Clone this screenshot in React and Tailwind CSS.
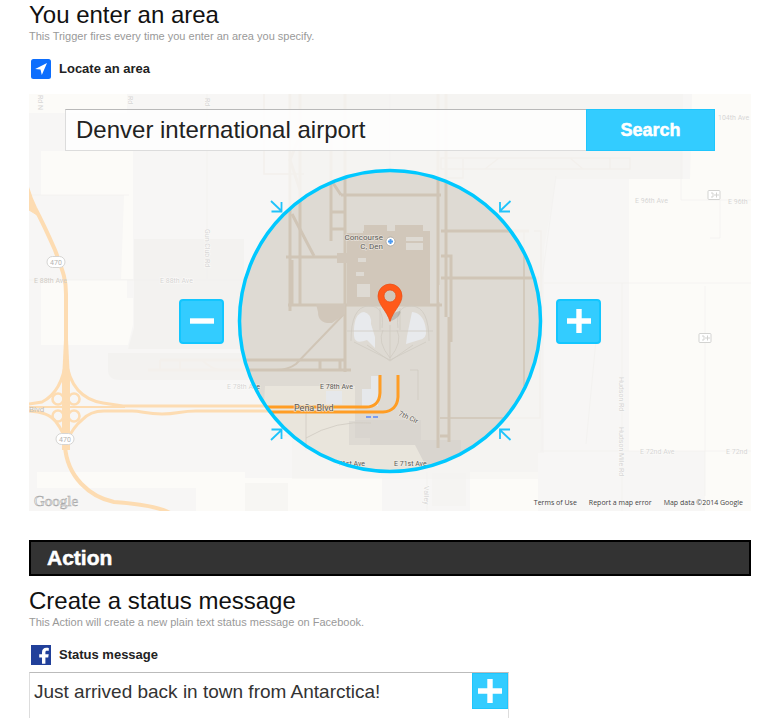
import { useId } from 'react';

const FONT = "font-['Liberation_Sans',Arial,sans-serif]";

function LocationIcon() {
  return (
    <svg viewBox="0 0 20 20" className="size-5" aria-hidden="true">
      <rect width="20" height="20" rx="2.5" fill="#0d6efd" />
      <path d="M16 4 4.200 10l5.300.500 1.300 5.500z" fill="#fff" />
    </svg>
  );
}

function FacebookIcon() {
  return (
    <svg viewBox="0 0 20 20" className="size-5" aria-hidden="true">
      <rect width="20" height="20" fill="#21409a" />
      <path
        d="M11 18.700v-6.300H8.200V9.300H11V7.200c0-2.900 1.700-4.500 4.300-4.500 1.200 0 2.200.1 2.500.2v2.900h-1.700c-1.400 0-1.700.7-1.700 1.600v1.900h3.300l-.5 3.100h-2.800v6.300z"
        fill="#fff"
      />
    </svg>
  );
}

function PlusIcon({ className }) {
  return (
    <svg viewBox="0 0 24 24" className={className} aria-hidden="true">
      <path d="M12 0v24M0 12h24" stroke="#fff" strokeWidth="5.4" />
    </svg>
  );
}

function MinusIcon({ className }) {
  return (
    <svg viewBox="0 0 24 24" className={className} aria-hidden="true">
      <path d="M0 12h24" stroke="#fff" strokeWidth="5.4" />
    </svg>
  );
}

function Label({ x, y, children, size = 7, anchor = 'start', rotate }) {
  return (
    <text
      x={x}
      y={y}
      fontSize={size}
      textAnchor={anchor}
      fill="#5c5a57"
      stroke="#f1eee8"
      strokeWidth="1.4"
      strokeOpacity="0.7"
      paintOrder="stroke"
      transform={rotate ? `rotate(${rotate} ${x} ${y})` : undefined}
    >
      {children}
    </text>
  );
}

function Shield({ x, y }) {
  return (
    <g>
      <rect x={x - 9} y={y - 5.5} width="18" height="11" rx="5.5" fill="#fff" stroke="#d6d5d3" />
      <text x={x} y={y + 2.5} fontSize="7" textAnchor="middle" fill="#b5b4b2">470</text>
    </g>
  );
}

function TransitStop({ x, y }) {
  return (
    <g fill="none" stroke="#d3d3d1">
      <rect x={x - 6} y={y - 4.5} width="12" height="9" rx="1" fill="#fff" />
      <path d={`M${x - 3} ${y - 2}h2v4h-2M${x} ${y}h5M${x + 2.5} ${y - 2.5}v5`} />
    </g>
  );
}

function MapDrawing() {
  const clip = useId();
  return (
    <svg
      viewBox="29 94 722 417"
      preserveAspectRatio="xMidYMid slice"
      className="absolute inset-0 size-full font-[Roboto,sans-serif]"
      aria-hidden="true"
    >
      <defs>
        <clipPath id={clip}>
          <circle cx="390" cy="321" r="151" />
        </clipPath>
      </defs>

      <rect x="29" y="94" width="722" height="417" fill="#dedbd6" />

      <g fill="#f2eee2">
        <path d="M29 94h98v19H29zM41 151h92v44H41zM124 195h9v84h-12zM41 280h86v18h6v27l-5 20H41z" />
        <path d="M629 179h61l2-85h59v417H705v-60H629z" />
        <path d="M37 472h208v39H196v-23H37zM470 472h68v39h-68zM245 478h137v33H245z" />
      </g>
      <g fill="#d1cdc6">
        <path d="M134 239h110v110H128l6-21zM108 353h140v27H120q-12 0-12-10z" />
        <path d="M292 94h391v85h-127l-12 70v230H292z" fillOpacity="0.45" />
        <path d="M245 483h43v28h-43zM432 473h34v33h-34z" fillOpacity="0.6" />
      </g>
      <path d="M705 453v58H538v-58z" fill="#dedbd6" />

      <g stroke="#c8c3ba" strokeWidth="1" fill="none" opacity="0.6">
        <path d="M29 195h100M29 280h215M207 94v185M556 176l-14 103v172M544 283h207M622 283v228M705 286v210M681 151v49h70M720 200v38h-10M540 451h211M596 340l-10 104" />
        <path d="M390 94v76M427 472v39" />
      </g>

      <g clipPath={`url(#${clip})`}>
        <rect x="238" y="169" width="304" height="304" fill="#dedad3" />
        <path d="M265 386h90v35h-6v24h70q8 0 12 10v20H260z" fill="#e9e5dc" />
        <path d="M355 420h66v20h40v32h-32l-14-27h-45v-7h-15z" fill="#d9d5cf" />
      </g>

      <g fill="none" stroke="#d0c5b6" strokeWidth="3">
        <path d="M290 94v217M300 94v212M331 130v111M345 94v278M438 94v354M446 94v223M341 195h100M331 212h13M331 229h13M286 257h64M288 305h154M351 370H148M160 360h184M320 360v10M340 360v10M441 231h88M441 256h10v86M441 278h98M449 317v125M440 436h10" />
        <path d="m292 214 22 42M331 180l10 15M292 260v45M300 190l-10-30 12-30" />
        <path d="M345 313 296 364q-8 6-20 6M160 360v10M180 360v10M202 360q10 10 20 10" strokeWidth="2" />
        <path d="M441 158h189v11H441zM485 169l14-11M570 158l13 11M610 158v11M446 169v9h17v-19M524 231v155M534 231h7v66M540 350v68H440M264 94v80h40" strokeWidth="1.5" />
      </g>

      <path
        d="M363 231h1v-6h23v6h8v-6h28v6h7v75h-83v-43h-10v-10h10v-20h16z"
        fill="#d1c7ba"
      />
      <path d="M316 304h29v10l-13 9q-14 1-14-11z" fill="#d1c7ba" clipPath={`url(#${clip})`} />
      <g fill="#dedad3">
        <path d="M406 237h17v4h-17zM406 243h17v7h-17zM358 258h8v4h-8zM356 272h8v4h-8zM357 284h13v13h-13zM432 285h3v17h-3zM439 285h4v17h-4z" />
      </g>

      <path d="M354 336q-1-23 10-24 8 2 7 12l4 13v11l-8-8q-12 5-13-4zM412 312q12 1 14 18 1 9-7 10l-13 4 1-8z" fill="#e8eaed" />
      <path d="M371 376h7v30h-16v-17h9zM326 391h16v13h-16z" fill="#e6e8eb" />
      <g fill="none" stroke="#cfcac1" strokeWidth="0.800">
        <path d="M351 341q0-34 17-35t14 22M429 341q0-34-17-35t-14 22M354 342l36 18 36-18M367 345l23 16 23-16M380 308v22M400 308v22M390 325v35M383 330q-6 12 7 28M397 330q6 12-7 28M347 331h86M410 370h8v30M306 410v41q0-15-35-17M306 438q30-18 65-15" />
      </g>

      <g fill="none" stroke="#ff9d24" strokeWidth="3" clipPath={`url(#${clip})`}>
        <path d="M262 407h104q13 0 14-14v-18M262 412h121q14-1 15-15v-22" />
      </g>
      <path d="M366 417h5M373 417h5" stroke="#7c9df0" strokeWidth="2" />

      <Label x={160} y={283}>E 88th Ave</Label>
      <Label x={635} y={203}>E 96th Ave</Label>
      <Label x={728} y={204}>E 96th</Label>
      <Label x={718} y={120}>104th Ave</Label>
      <Label x={227} y={389}>E 78th Ave</Label>
      <Label x={320} y={389}>E 78th Ave</Label>
      <Label x={640} y={454}>E 72nd Ave</Label>
      <Label x={726} y={454}>E 72nd</Label>
      <Label x={205} y={229} rotate={90}>Gun Club Rd</Label>
      <Label x={619} y={377} rotate={90}>Hudson Rd</Label>
      <Label x={619} y={427} rotate={90}>Hudson Mile Rd</Label>
      <Label x={424} y={486} rotate={90}>Valley</Label>
      <Label x={38} y={95} rotate={90}>Rd N</Label>
      <Label x={128} y={96} rotate={90}>Rd</Label>
      <Label x={205} y={98} rotate={90}>Rd</Label>
      <Label x={294} y={411} size={9}>Peña Blvd</Label>
      <Label x={383} y={240} size={8} anchor="end">Concourse</Label>
      <Label x={383} y={249} size={8} anchor="end">C, Den</Label>
      <Label x={398} y={415} rotate={25}>7th Cir</Label>
      <Label x={338} y={466}>71st Ave</Label>
      <Label x={394} y={466}>E 71st Ave</Label>

      <circle cx="390.500" cy="241.500" r="4.500" fill="#fff" stroke="#a8a39b" strokeWidth="0.800" />
      <path d="M390.500 239v5M388 241.500h5" stroke="#4c9af0" strokeWidth="2" />

      <path
        fillRule="evenodd"
        fill="#fff"
        fillOpacity="0.74"
        d="M29 94h722v417H29zM239 321a151 151 0 1 0 302 0 151 151 0 1 0-302 0z"
      />

      <g fill="none" stroke="#fddcb2">
        <path d="M26 184q4 14 9 24 9 17 20 42c9 24 11 30 11 44v66" strokeWidth="4" />
        <path d="M29 190v20l8 5z" fill="#fddcb2" strokeWidth="1" />
        <path d="M64 340h4l2 40v70h-8v-70z" fill="#fddcb2" stroke="none" />
        <path d="M65 446c2 31 25 51 49 56q42 3 56 11" strokeWidth="4" />
        <path d="M66 360q-4 32-24 42l-13 2M66 360q5 38 37 43l20 3h144" strokeWidth="3" />
        <path d="M29 411q20 1 27 11 8 10 9 20M66 442q8-16 16-22 8-9 22-9h28c10 0 14 3 30 3s18-3 34-3h73" strokeWidth="3" />
        <path d="M29 407h96" strokeWidth="2" />
        <g strokeWidth="2.600">
          <circle cx="58" cy="399" r="5.500" />
          <circle cx="74" cy="399" r="5.500" />
          <circle cx="58" cy="416" r="5.500" />
          <circle cx="74" cy="416" r="5.500" />
        </g>
      </g>
      <text x="29" y="412" fontSize="8" fill="#c4bfb7">Blvd</text>
      <text x="34" y="283" fontSize="7" fill="#d0ccc6">E 88th Ave</text>

      <Shield x={56} y={262} />
      <Shield x={65} y={439} />
      <TransitStop x={714} y={195} />
      <TransitStop x={705} y={338} />

      <circle cx="390" cy="321" r="150.500" fill="none" stroke="#00c8ff" strokeWidth="3.500" />

      <g fill="none" stroke="#1fc3fb" strokeWidth="1.800">
        <path d="m271 201 11 10.500M281.500 202v9.500H271.500" />
        <path d="m510.500 201-11 10.500M500 202v9.500h10" />
        <path d="m271 440 11-10.500M271.500 429.500h10v9.500" />
        <path d="m510.500 440-11-10.500M500 439v-9.500h10" />
      </g>

      <ellipse cx="395" cy="316" rx="7" ry="2.500" fill="#000" opacity="0.14" transform="rotate(-40 395 316)" />
      <path
        fillRule="evenodd"
        d="M390 321.500c-3-10.500-12-17-12-25.500a12 12 0 0 1 24 0c0 8.500-9 15-12 25.500zM384 296a6 6 0 1 0 12 0 6 6 0 1 0-12 0z"
        fill="#ff5a1a"
        stroke="#e84c12"
        strokeWidth="0.700"
      />
    </svg>
  );
}

function SectionIntro({ title, note }) {
  return (
    <header>
      <h2 className="text-2xl leading-7 text-[#111]">{title}</h2>
      <p className="text-[11px] leading-[14px] text-[#999]">{note}</p>
    </header>
  );
}

export default function App() {
  return (
    <main className={`bg-white px-[29px] pt-px ${FONT}`}>
      <section>
        <SectionIntro title="You enter an area" note="This Trigger fires every time you enter an area you specify." />
        <label htmlFor="area" className="mt-4 ml-0.5 flex w-fit items-center gap-2 text-[13px] leading-5 font-bold text-[#222]">
          <LocationIcon />
          Locate an area
        </label>

        <div className="relative mt-[15px] flex h-[417px] flex-col overflow-hidden">
          <MapDrawing />
          <form className="relative mx-9 mt-[15px] flex h-[42px]" onSubmit={(e) => e.preventDefault()}>
            <input
              id="area"
              type="text"
              defaultValue="Denver international airport"
              className="min-w-0 flex-1 border border-r-0 border-[#dcdcdc] border-t-[#b9b9b9] bg-white/80 px-[10px] text-2xl text-[#222] outline-none"
            />
            <button type="submit" className="w-[129px] border border-[#1fc6fd] bg-[#33ccff] text-lg font-bold text-white [-webkit-text-stroke:0.5px_white]">
              Search
            </button>
          </form>

          <div className="relative mt-[18px] flex h-[304px] items-center justify-center gap-[332px]">
            <button type="button" aria-label="Zoom out" className="grid size-[45px] place-items-center rounded-sm border-2 border-[#12c6ff] bg-[#33ccff]">
              <MinusIcon className="size-6" />
            </button>
            <button type="button" aria-label="Zoom in" className="grid size-[45px] place-items-center rounded-sm border-2 border-[#12c6ff] bg-[#33ccff]">
              <PlusIcon className="size-6" />
            </button>
          </div>

          <footer className="relative mt-auto flex items-end justify-between pr-2 pl-[5px]">
            <span className="font-['Liberation_Serif',serif] text-[15px] leading-5 text-[#fafafa] [-webkit-text-stroke:0.6px_#a9a9a9]">Google</span>
            <div className="flex gap-3 font-['Open_Sans',sans-serif] text-[7px] leading-4 text-[#444]">
              <a href="#terms">Terms of Use</a>
              <a href="#report">Report a map error</a>
              <span>Map data ©2014 Google</span>
            </div>
          </footer>
        </div>
      </section>

      <section>
        <h1 className="mt-[29px] mb-[11px] h-9 border-2 border-black bg-[#333] pl-4 text-[21px] leading-8 font-bold text-white [-webkit-text-stroke:0.5px_white]">
          Action
        </h1>
        <SectionIntro title="Create a status message" note="This Action will create a new plain text status message on Facebook." />
        <label htmlFor="status" className="mt-4 ml-0.5 flex w-fit items-center gap-2 text-[13px] leading-5 font-bold text-[#222]">
          <FacebookIcon />
          Status message
        </label>
        <div className="mt-[7px] flex h-[46px] w-full max-w-[480px] items-start border border-b-0 border-[#ddd] border-t-[#bbb]">
          <textarea
            id="status"
            rows={1}
            defaultValue="Just arrived back in town from Antarctica!"
            className="h-full min-w-0 flex-1 resize-none overflow-hidden px-1 pt-[5px] text-[19px] leading-7 text-[#333] outline-none"
          />
          <button type="button" aria-label="Add ingredient" className="grid size-9 place-items-center border border-[#1fc6fd] bg-[#33ccff]">
            <PlusIcon className="size-6" />
          </button>
        </div>
      </section>
    </main>
  );
}
